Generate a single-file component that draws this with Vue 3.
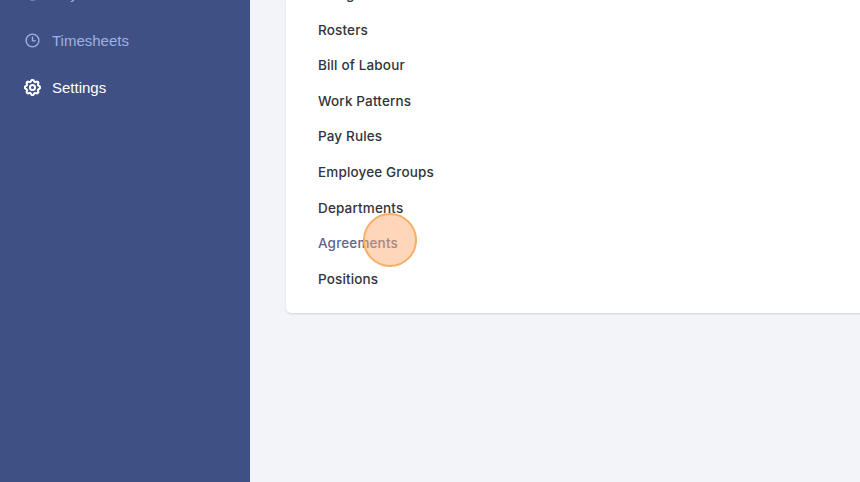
<script setup>
const links = [
  { label: 'Assignments' },
  { label: 'Rosters' },
  { label: 'Bill of Labour' },
  { label: 'Work Patterns' },
  { label: 'Pay Rules' },
  { label: 'Employee Groups' },
  { label: 'Departments' },
  { label: 'Agreements', active: true },
  { label: 'Positions' }
]
</script>

<template>
  <div class="page">
    <aside class="sidebar">
      <div class="nav-item">
        <svg class="nav-icon" viewBox="0 0 24 24" fill="none" stroke="currentColor" stroke-width="2">
          <circle cx="12" cy="12" r="9" />
        </svg>
        <span>Payroll</span>
      </div>
      <div class="nav-item">
        <svg class="nav-icon" viewBox="0 0 24 24" fill="none" stroke="currentColor" stroke-width="2" stroke-linecap="round" stroke-linejoin="round">
          <circle cx="12" cy="12" r="9" />
          <path d="M12 7v5.5h4" />
        </svg>
        <span>Timesheets</span>
      </div>
      <div class="nav-item current">
        <svg class="nav-icon" viewBox="2 2 20 20" fill="none" stroke="currentColor" stroke-width="2.4" stroke-linecap="round" stroke-linejoin="round">
          <path d="M10.325 4.317c.426-1.756 2.924-1.756 3.35 0a1.724 1.724 0 002.573 1.066c1.543-.94 3.31.826 2.37 2.37a1.724 1.724 0 001.065 2.572c1.756.426 1.756 2.924 0 3.35a1.724 1.724 0 00-1.066 2.573c.94 1.543-.826 3.31-2.37 2.37a1.724 1.724 0 00-2.572 1.065c-.426 1.756-2.924 1.756-3.35 0a1.724 1.724 0 00-2.573-1.066c-1.543.94-3.31-.826-2.37-2.37a1.724 1.724 0 00-1.065-2.572c-1.756-.426-1.756-2.924 0-3.35a1.724 1.724 0 001.066-2.573c-.94-1.543.826-3.31 2.37-2.37.996.608 2.296.07 2.572-1.065z" />
          <path d="M15 12a3 3 0 11-6 0 3 3 0 016 0z" />
        </svg>
        <span>Settings</span>
      </div>
    </aside>

    <main class="content">
      <section class="card">
        <a
          v-for="link in links"
          :key="link.label"
          class="link"
          :class="{ active: link.active }"
        >{{ link.label }}</a>
      </section>
    </main>

    <div class="click-marker"></div>
  </div>
</template>

<style scoped>
.page {
  position: relative;
  display: flex;
  width: 860px;
  height: 482px;
  overflow: hidden;
  background: #f3f3fa;
}

.sidebar {
  flex: 0 0 250px;
  box-sizing: border-box;
  display: flex;
  flex-direction: column;
  gap: 23px;
  margin-top: -18.5px;
  padding-left: 24px;
  background: #3f5084;
  font-family: "Liberation Sans", Arial, sans-serif;
  font-size: 15px;
}

.nav-item {
  display: flex;
  align-items: center;
  gap: 11px;
  height: 24px;
  color: #9fb0e3;
}

.nav-item.current {
  color: #ffffff;
}

.nav-icon {
  width: 17px;
  height: 17px;
}

.content {
  flex: 1;
  padding-left: 36px;
}

.card {
  display: flex;
  flex-direction: column;
  width: 700px;
  height: 313px;
  box-sizing: border-box;
  padding-left: 32px;
  border-radius: 0 0 5px 5px;
  background: #ffffff;
  box-shadow: 0 1px 2px rgba(60, 60, 90, 0.18);
  font-family: Inter, "Noto Sans", sans-serif;
  font-size: 13.5px;
  font-weight: 500;
  letter-spacing: 0.15px;
  color: #33333a;
}

.link {
  flex: 0 0 35.6px;
  line-height: 35.6px;
}

.link:first-child {
  margin-top: -23px;
}

.link.active {
  color: #5a6790;
}

.click-marker {
  position: absolute;
  left: 363px;
  top: 213px;
  width: 54px;
  height: 54px;
  box-sizing: border-box;
  border: 2px solid #f7ae66;
  border-radius: 50%;
  background: rgba(252, 170, 110, 0.48);
}
</style>
